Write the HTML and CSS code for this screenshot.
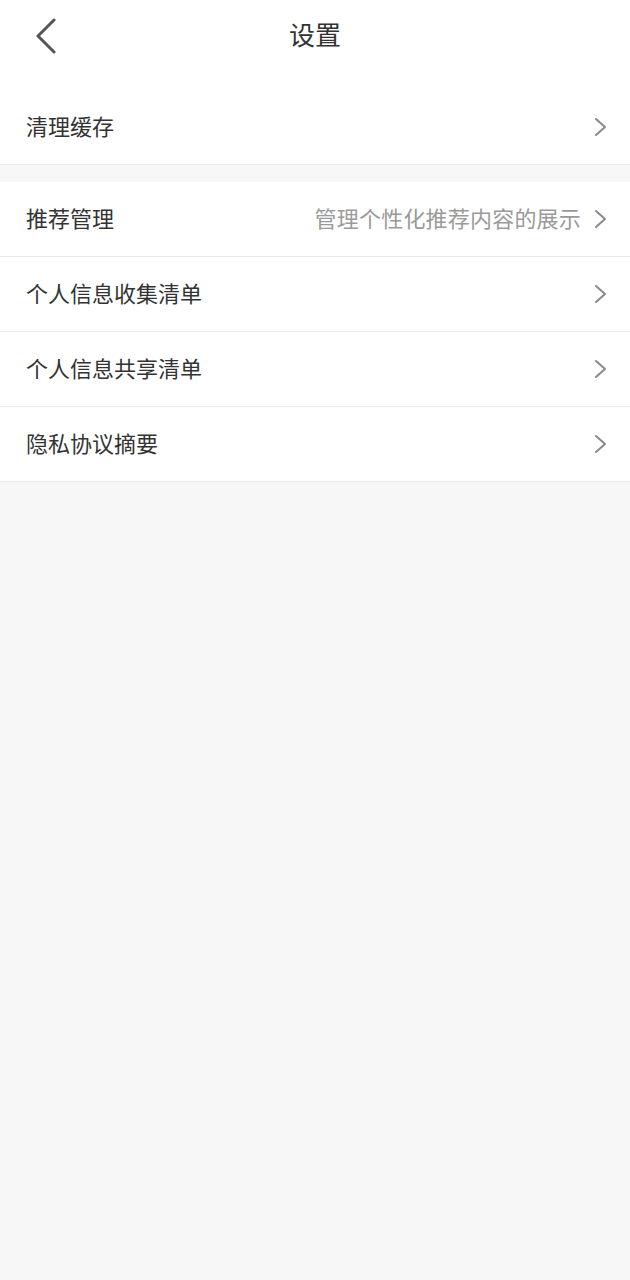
FILE: index.html
```html
<!DOCTYPE html>
<html lang="zh">
<head>
<meta charset="utf-8">
<link rel="stylesheet" href="styles.css">
</head>
<body>
<div class="page">
  <header class="topbar">
    <span class="back">
      <svg width="24" height="36" viewBox="0 0 24 36"><path d="M20 2 L4 18 L20 34" fill="none" stroke="#555" stroke-width="3" stroke-linecap="round" stroke-linejoin="round"/></svg>
    </span>
    <h1 class="title">设置</h1>
  </header>
  <section class="group group-first">
    <div class="row"><span class="label">清理缓存</span><span class="right"><svg class="chev" width="14" height="20" viewBox="0 0 14 20"><path d="M2 2 L11 10 L2 18" fill="none" stroke="#8a8a8a" stroke-width="2" stroke-linecap="round" stroke-linejoin="round"/></svg></span></div>
  </section>
  <section class="group">
    <div class="row"><span class="label">推荐管理</span><span class="right"><span class="hint">管理个性化推荐内容的展示</span><svg class="chev" width="14" height="20" viewBox="0 0 14 20"><path d="M2 2 L11 10 L2 18" fill="none" stroke="#8a8a8a" stroke-width="2" stroke-linecap="round" stroke-linejoin="round"/></svg></span></div>
    <div class="row"><span class="label">个人信息收集清单</span><span class="right"><svg class="chev" width="14" height="20" viewBox="0 0 14 20"><path d="M2 2 L11 10 L2 18" fill="none" stroke="#8a8a8a" stroke-width="2" stroke-linecap="round" stroke-linejoin="round"/></svg></span></div>
    <div class="row"><span class="label">个人信息共享清单</span><span class="right"><svg class="chev" width="14" height="20" viewBox="0 0 14 20"><path d="M2 2 L11 10 L2 18" fill="none" stroke="#8a8a8a" stroke-width="2" stroke-linecap="round" stroke-linejoin="round"/></svg></span></div>
    <div class="row"><span class="label">隐私协议摘要</span><span class="right"><svg class="chev" width="14" height="20" viewBox="0 0 14 20"><path d="M2 2 L11 10 L2 18" fill="none" stroke="#8a8a8a" stroke-width="2" stroke-linecap="round" stroke-linejoin="round"/></svg></span></div>
  </section>
</div>
</body>
</html>
```
FILE: styles.css
```css
* { box-sizing: border-box; }
html, body {
  margin: 0;
  padding: 0;
  background: #f7f7f7;
  font-family: "Noto Sans CJK SC", "Noto Sans", sans-serif;
}
.page {
  width: 630px;
  min-height: 1280px;
  background: #f7f7f7;
}
.topbar {
  position: relative;
  height: 72px;
  padding-bottom: 4px;
  background: #fff;
  display: flex;
  align-items: center;
  justify-content: center;
}
.back {
  position: absolute;
  left: 34px;
  top: 18px;
  display: flex;
}
.title {
  margin: 0;
  font-size: 26px;
  font-weight: 400;
  color: #333;
  line-height: 1;
}
.group {
  background: #fff;
  margin-bottom: 17px;
}
.group-first {
  padding-top: 18px;
}
.row {
  height: 75px;
  display: flex;
  align-items: center;
  justify-content: space-between;
  padding: 0 22px 0 26px;
  border-bottom: 1px solid #ebebeb;
}
.label {
  font-size: 22px;
  color: #333;
  line-height: 1;
  padding-bottom: 5px;
}
.right {
  display: flex;
  align-items: center;
  gap: 13px;
}
.hint {
  font-size: 22px;
  color: #9a9a9a;
  line-height: 1;
  padding-bottom: 5px;
  letter-spacing: 0.2px;
}
.chev { display: block; }
```
